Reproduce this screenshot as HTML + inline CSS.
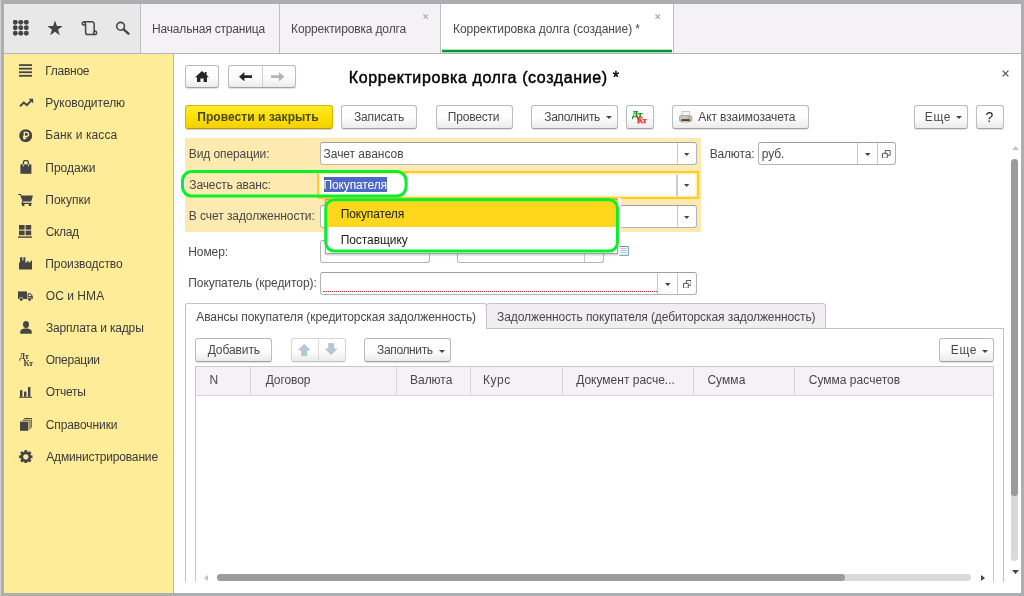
<!DOCTYPE html>
<html lang="ru">
<head>
<meta charset="utf-8">
<title>Корректировка долга (создание) *</title>
<style>
html,body{margin:0;padding:0;}
body{width:1024px;height:596px;overflow:hidden;background:#adaeb0;position:relative;
 font-family:"Liberation Sans",sans-serif;font-size:12px;color:#484848;}
.abs,.t,.btn,.ybtn,.inp{position:absolute;}
.t{white-space:nowrap;}
#win{position:absolute;left:4px;top:4px;width:1017px;height:589px;background:#fff;overflow:hidden;}
#L{position:absolute;left:-4px;top:-4px;width:1024px;height:596px;will-change:transform;}
.btn{box-sizing:border-box;border:1px solid #bcbcbc;border-bottom-color:#a2a2a2;border-radius:3px;
 background:linear-gradient(#ffffff 0%,#fefefe 50%,#ebebeb 100%);box-shadow:0 1px 1px rgba(0,0,0,0.13);}
.ybtn{box-sizing:border-box;border:1px solid #d6b400;border-bottom-color:#b99a00;border-radius:3px;
 background:linear-gradient(#ffea2e 0%,#ffe000 50%,#f3d000 100%);box-shadow:0 1px 1px rgba(0,0,0,0.2);}
.inp{box-sizing:border-box;border:1px solid #b4b4b4;border-top-color:#a0a0a0;border-radius:3px;background:#fff;}
</style>
</head>
<body>
<div style="position:absolute;left:0;top:0;width:1px;height:596px;background:#d0d0d0;"></div>
<div id="win"><div id="L">
<div class="abs" style="left:4px;top:4px;width:136px;height:49px;background:#e8e8e8;"></div>
<div class="abs" style="left:140px;top:4px;width:881px;height:49px;background:#f5f2f6;"></div>
<div class="abs" style="left:441px;top:4px;width:232px;height:49px;background:#ffffff;"></div>
<div class="abs" style="left:4px;top:53px;width:1017px;height:1px;background:#b7b5ba;"></div>
<div class="abs" style="left:140px;top:4px;width:1px;height:49px;background:#c0bec3;"></div>
<div class="abs" style="left:279px;top:4px;width:1px;height:49px;background:#c0bec3;"></div>
<div class="abs" style="left:440px;top:4px;width:1px;height:49px;background:#c0bec3;"></div>
<div class="abs" style="left:673px;top:4px;width:1px;height:49px;background:#c0bec3;"></div>
<div class="abs" style="left:442px;top:50px;width:230px;height:2px;background:#06963a;"></div>
<div class="abs" style="left:442px;top:49px;width:230px;height:1px;background:rgba(6,150,58,0.3);"></div>
<div class="abs" style="left:442px;top:52px;width:230px;height:1px;background:rgba(6,150,58,0.35);"></div>
<div class="t" style="left:152.04px;top:22.00px;font-size:12px;line-height:14px;height:14px;letter-spacing:-0.175px;">Начальная страница</div>
<div class="t" style="left:291.04px;top:22.00px;font-size:12px;line-height:14px;height:14px;letter-spacing:-0.145px;">Корректировка долга</div>
<div class="t" style="left:453.04px;top:22.00px;font-size:12px;line-height:14px;height:14px;letter-spacing:-0.053px;">Корректировка долга (создание) *</div>
<svg class="abs" style="left:423.3px;top:14.2px;" width="5.4" height="5.4" viewBox="0 0 5.4 5.4"><path d="M0.5 0.5L4.9 4.9M4.9 0.5L0.5 4.9" stroke="#adadad" stroke-width="1.15" fill="none"/></svg>
<svg class="abs" style="left:655.3px;top:14.2px;" width="5.4" height="5.4" viewBox="0 0 5.4 5.4"><path d="M0.5 0.5L4.9 4.9M4.9 0.5L0.5 4.9" stroke="#adadad" stroke-width="1.15" fill="none"/></svg>
<svg class="abs" style="left:12.9px;top:19.9px;" width="16" height="16" viewBox="0 0 16 16"><g fill="#454545"><circle cx="2.3" cy="2.3" r="2.45"/><circle cx="2.3" cy="7.8" r="2.45"/><circle cx="2.3" cy="13.3" r="2.45"/><circle cx="7.8" cy="2.3" r="2.45"/><circle cx="7.8" cy="7.8" r="2.45"/><circle cx="7.8" cy="13.3" r="2.45"/><circle cx="13.3" cy="2.3" r="2.45"/><circle cx="13.3" cy="7.8" r="2.45"/><circle cx="13.3" cy="13.3" r="2.45"/></g></svg>
<svg class="abs" style="left:46.65px;top:20.4px;" width="16" height="16" viewBox="0 0 16 16"><polygon points="8.00,0.50 9.91,5.97 15.70,6.10 11.09,9.60 12.76,15.15 8.00,11.85 3.24,15.15 4.91,9.60 0.30,6.10 6.09,5.97" fill="#454545"/></svg>
<svg class="abs" style="left:81px;top:20px;" width="17" height="16" viewBox="0 0 17 16"><g fill="none" stroke="#454545" stroke-width="1.5"><path d="M4.6 3.6V12.4A2.2 2.2 0 0 0 6.8 14.6H14"/><path d="M2.6 1.8H11A2.2 2.2 0 0 1 13.2 4V11.2"/><circle cx="2.7" cy="3.5" r="1.55" fill="#e9e9e9"/><circle cx="14.1" cy="12.9" r="1.55" fill="#e9e9e9"/></g></svg>
<svg class="abs" style="left:115px;top:21px;" width="16" height="15" viewBox="0 0 16 15"><circle cx="5.6" cy="5.3" r="3.9" fill="none" stroke="#454545" stroke-width="1.6"/><path d="M8.6 8.3L13.4 12.6" stroke="#454545" stroke-width="2.4" stroke-linecap="round"/></svg>
<div class="abs" style="left:4px;top:54px;width:169px;height:539px;background:#feec99;"></div>
<div class="abs" style="left:173px;top:54px;width:1px;height:539px;background:#d3bf55;"></div>
<div class="t" style="left:45.34px;top:64.00px;font-size:12px;line-height:14px;height:14px;letter-spacing:-0.284px;color:#3a3a3a;">Главное</div>
<div class="t" style="left:45.34px;top:96.00px;font-size:12px;line-height:14px;height:14px;letter-spacing:-0.025px;color:#3a3a3a;">Руководителю</div>
<div class="t" style="left:45.34px;top:128.00px;font-size:12px;line-height:14px;height:14px;letter-spacing:0.108px;color:#3a3a3a;">Банк и касса</div>
<div class="t" style="left:45.34px;top:161.00px;font-size:12px;line-height:14px;height:14px;letter-spacing:-0.008px;color:#3a3a3a;">Продажи</div>
<div class="t" style="left:45.34px;top:193.00px;font-size:12px;line-height:14px;height:14px;letter-spacing:-0.011px;color:#3a3a3a;">Покупки</div>
<div class="t" style="left:45.70px;top:225.00px;font-size:12px;line-height:14px;height:14px;letter-spacing:-0.346px;color:#3a3a3a;">Склад</div>
<div class="t" style="left:45.34px;top:257.00px;font-size:12px;line-height:14px;height:14px;letter-spacing:-0.082px;color:#3a3a3a;">Производство</div>
<div class="t" style="left:45.76px;top:289.00px;font-size:12px;line-height:14px;height:14px;letter-spacing:0.050px;color:#3a3a3a;">ОС и НМА</div>
<div class="t" style="left:45.88px;top:321.00px;font-size:12px;line-height:14px;height:14px;letter-spacing:-0.168px;color:#3a3a3a;">Зарплата и кадры</div>
<div class="t" style="left:45.76px;top:353.00px;font-size:12px;line-height:14px;height:14px;letter-spacing:-0.262px;color:#3a3a3a;">Операции</div>
<div class="t" style="left:45.76px;top:385.00px;font-size:12px;line-height:14px;height:14px;letter-spacing:-0.290px;color:#3a3a3a;">Отчеты</div>
<div class="t" style="left:45.70px;top:418.00px;font-size:12px;line-height:14px;height:14px;letter-spacing:-0.082px;color:#3a3a3a;">Справочники</div>
<div class="t" style="left:46.24px;top:450.00px;font-size:12px;line-height:14px;height:14px;letter-spacing:-0.163px;color:#3a3a3a;">Администрирование</div>
<svg class="abs" style="left:19px;top:64.4px;" width="13" height="13" viewBox="0 0 13 13"><rect x="0" y="0.20" width="13" height="1.8" fill="#454545"/><rect x="0" y="3.77" width="13" height="1.8" fill="#454545"/><rect x="0" y="7.34" width="13" height="1.8" fill="#454545"/><rect x="0" y="10.91" width="13" height="1.8" fill="#454545"/></svg>
<svg class="abs" style="left:18.5px;top:97.5px;" width="15" height="10" viewBox="0 0 15 10"><path d="M1 8.3L4.8 4.6L7.8 7.1L12.2 2.6" fill="none" stroke="#454545" stroke-width="1.9" stroke-linejoin="miter"/><path d="M9.6 0.8H14.2V5.4Z" fill="#454545"/></svg>
<svg class="abs" style="left:19px;top:129px;" width="13.4" height="13.4" viewBox="0 0 13.4 13.4"><circle cx="6.7" cy="6.7" r="6.5" fill="#454545"/><path d="M5.3 10.6V3.3H7.6A2 2 0 0 1 7.6 7.3H4M4 9H7.6" fill="none" stroke="#feec99" stroke-width="1.3"/></svg>
<svg class="abs" style="left:19.5px;top:159.6px;" width="12" height="14" viewBox="0 0 12 14"><path d="M0.4 4.4H11.4V13.8H0.4Z" fill="#454545"/><path d="M3.4 6V2.8A2.5 2.5 0 0 1 8.4 2.8V6" fill="none" stroke="#454545" stroke-width="1.3"/><path d="M3.4 4.4V6.4M8.4 4.4V6.4" stroke="#feec99" stroke-width="0.9"/></svg>
<svg class="abs" style="left:18px;top:192.5px;" width="15.5" height="13.5" viewBox="0 0 15.5 13.5"><path d="M0.2 0.9H2.8L3.6 2.6H15L13.2 8.4H4.6L2.2 1.9H0.2Z" fill="#454545"/><path d="M4.8 8.2L4 10.3H13.6" fill="none" stroke="#454545" stroke-width="1.2"/><circle cx="5.2" cy="11.9" r="1.35" fill="#454545"/><circle cx="12" cy="11.9" r="1.35" fill="#454545"/></svg>
<svg class="abs" style="left:18.2px;top:225px;" width="14.2" height="13" viewBox="0 0 14.2 13"><g fill="#454545"><rect x="1" y="0" width="5.6" height="4.6"/><rect x="7.6" y="0" width="5.6" height="4.6"/><rect x="1" y="5.6" width="5.6" height="4.6"/><rect x="7.6" y="5.6" width="5.6" height="4.6"/><rect x="0" y="11.4" width="14.2" height="1.4"/></g></svg>
<svg class="abs" style="left:19px;top:257.3px;" width="13.4" height="12.4" viewBox="0 0 13.4 12.4"><path d="M0 12.4V6.2L1 4.8V0.2H3.4V3.6H4.4V0.2H6.4V6L9.6 3.4V6L13.2 3.2V12.4Z" fill="#454545"/></svg>
<svg class="abs" style="left:18.2px;top:290.8px;" width="15" height="10.4" viewBox="0 0 15 10.4"><path d="M0 0.4H9V8H0Z" fill="#454545"/><path d="M9.6 2.2H12.6L14.8 5V8H9.6Z" fill="#454545"/><path d="M10.6 3.2H12.2L13.6 5H10.6Z" fill="#feec99"/><circle cx="3.2" cy="8.3" r="1.9" fill="#454545" stroke="#feec99" stroke-width="0.7"/><circle cx="11.6" cy="8.3" r="1.9" fill="#454545" stroke="#feec99" stroke-width="0.7"/></svg>
<svg class="abs" style="left:19.6px;top:321.3px;" width="12" height="13" viewBox="0 0 12 13"><ellipse cx="6" cy="3.5" rx="3" ry="3.5" fill="#454545"/><path d="M0.3 12.8V10.6C0.3 8.8 2.4 8.2 4.2 7.6H7.8C9.6 8.2 11.7 8.8 11.7 10.6V12.8Z" fill="#454545"/></svg>
<div class="t" style="left:19.2px;top:352.2px;font-family:'Liberation Serif',serif;font-weight:bold;font-size:8.5px;line-height:9px;letter-spacing:-0.3px;color:#454545;">Дт</div>
<div class="t" style="left:23.4px;top:358.6px;font-family:'Liberation Serif',serif;font-weight:bold;font-size:8.5px;line-height:9px;letter-spacing:-0.3px;color:#454545;">Кт</div>
<svg class="abs" style="left:19.2px;top:386.8px;" width="13.2" height="11" viewBox="0 0 13.2 11"><g fill="#454545"><rect x="1" y="3.2" width="2.4" height="6.6"/><rect x="5" y="4.6" width="2.4" height="5.2"/><rect x="9" y="0" width="2.4" height="9.8"/><rect x="0" y="9.8" width="13.2" height="1"/></g></svg>
<svg class="abs" style="left:19.8px;top:417.8px;" width="12.4" height="13" viewBox="0 0 12.4 13"><path d="M4.2 0.5H11.8V9.6" fill="none" stroke="#454545" stroke-width="1"/><path d="M2.4 2.2H10V11.2" fill="none" stroke="#454545" stroke-width="1"/><rect x="0" y="3.6" width="8.4" height="9.2" fill="#454545"/></svg>
<svg class="abs" style="left:19.2px;top:449.9px;" width="13.6" height="13.6" viewBox="0 0 13.6 13.6"><g transform="translate(6.8 6.8)"><g fill="#454545"><rect x="-1.45" y="-6.7" width="2.9" height="3" transform="rotate(0)"/><rect x="-1.45" y="-6.7" width="2.9" height="3" transform="rotate(45)"/><rect x="-1.45" y="-6.7" width="2.9" height="3" transform="rotate(90)"/><rect x="-1.45" y="-6.7" width="2.9" height="3" transform="rotate(135)"/><rect x="-1.45" y="-6.7" width="2.9" height="3" transform="rotate(180)"/><rect x="-1.45" y="-6.7" width="2.9" height="3" transform="rotate(225)"/><rect x="-1.45" y="-6.7" width="2.9" height="3" transform="rotate(270)"/><rect x="-1.45" y="-6.7" width="2.9" height="3" transform="rotate(315)"/></g><circle r="3.9" fill="none" stroke="#454545" stroke-width="2.6"/></g></svg>
<div class="btn" style="left:185px;top:65px;width:34px;height:23px;"></div>
<svg class="abs" style="left:195px;top:70.6px;" width="14" height="11.4" viewBox="0 0 14 11.4"><path d="M7 0L0 6.2H2V11.4H5.4V7.4H8.6V11.4H12V6.2H14L11.6 4.1V1H9.8V2.5Z" fill="#262626"/></svg>
<div class="btn" style="left:228px;top:65px;width:68px;height:23px;"></div>
<div class="abs" style="left:262px;top:66px;width:1px;height:21px;background:#cfcfcf;"></div>
<svg class="abs" style="left:239px;top:72px;" width="13.4" height="9.4" viewBox="0 0 13.4 9.4"><path d="M0 4.7L5.4 0V3.3H13.4V6.1H5.4V9.4Z" fill="#262626"/></svg>
<svg class="abs" style="left:271px;top:72px;" width="13.4" height="9.4" viewBox="0 0 13.4 9.4"><path d="M13.4 4.7L8 0V3.3H0V6.1H8V9.4Z" fill="#b4b4b4"/></svg>
<div class="t" style="left:348.72px;top:68.46px;font-size:16px;line-height:19px;height:19px;letter-spacing:0.602px;color:#000;-webkit-text-stroke:0.45px #000;">Корректировка долга (создание) *</div>
<svg class="abs" style="left:1002px;top:70.4px;" width="7" height="7" viewBox="0 0 7 7"><path d="M0.6 0.6L6.4 6.4M6.4 0.6L0.6 6.4" stroke="#555" stroke-width="1.3" fill="none"/></svg>
<div class="ybtn" style="left:185px;top:105px;width:148px;height:24px;"></div>
<div class="t" style="left:197.22px;top:110.00px;font-size:12px;line-height:14px;height:14px;letter-spacing:0.068px;font-weight:bold;color:#4a4720;">Провести и закрыть</div>
<div class="btn" style="left:341px;top:105px;width:76px;height:24px;"></div>
<div class="t" style="left:353.98px;top:110.00px;font-size:12px;line-height:14px;height:14px;letter-spacing:-0.158px;">Записать</div>
<div class="btn" style="left:436px;top:105px;width:77px;height:24px;"></div>
<div class="t" style="left:447.84px;top:110.00px;font-size:12px;line-height:14px;height:14px;letter-spacing:-0.191px;">Провести</div>
<div class="btn" style="left:531px;top:105px;width:87px;height:24px;"></div>
<div class="t" style="left:544.33px;top:110.00px;font-size:12px;line-height:14px;height:14px;letter-spacing:-0.366px;">Заполнить</div>
<svg class="abs" style="left:605.9px;top:116.1px;" width="6" height="3" viewBox="0 0 6 3"><path d="M0 0H6L3.0 3Z" fill="#444"/></svg>
<div class="btn" style="left:626px;top:105px;width:28px;height:24px;"></div>
<div class="t" style="left:632px;top:108.5px;font-family:'Liberation Serif',serif;font-weight:bold;font-size:9px;line-height:10px;letter-spacing:-0.2px;color:#178a17;-webkit-text-stroke:0.25px #178a17;">Дт</div>
<div class="t" style="left:637px;top:115.6px;font-family:'Liberation Serif',serif;font-weight:bold;font-size:8.2px;line-height:10px;letter-spacing:-0.2px;color:#ff2a2a;-webkit-text-stroke:0.25px #ff2a2a;">Кт</div>
<div class="btn" style="left:672px;top:105px;width:137px;height:24px;"></div>
<div class="t" style="left:698.24px;top:110.00px;font-size:12px;line-height:14px;height:14px;letter-spacing:-0.097px;">Акт взаимозачета</div>
<svg class="abs" style="left:679.3px;top:110.6px;" width="13.4" height="12.6" viewBox="0 0 13.4 12.6"><rect x="3" y="0.5" width="7.4" height="5" fill="#f2f7fb" stroke="#a9bfd0" stroke-width="0.8"/><rect x="0.5" y="4.6" width="12.4" height="6" rx="1.6" fill="#cfc4ba" stroke="#a59c94" stroke-width="0.8"/><rect x="2.4" y="8.2" width="8.6" height="2" fill="#3c3c3c"/><rect x="2.8" y="10.2" width="7.8" height="1.8" fill="#e9e2da" stroke="#b5aca4" stroke-width="0.5"/><rect x="8.8" y="6" width="1.4" height="1" fill="#e66"/><rect x="10.6" y="6" width="1.2" height="1" fill="#6b6"/></svg>
<div class="btn" style="left:914px;top:105px;width:54px;height:24px;"></div>
<div class="t" style="left:924.84px;top:110.00px;font-size:12px;line-height:14px;height:14px;letter-spacing:0.648px;">Еще</div>
<svg class="abs" style="left:956.4px;top:116.1px;" width="6" height="3" viewBox="0 0 6 3"><path d="M0 0H6L3.0 3Z" fill="#444"/></svg>
<div class="btn" style="left:976px;top:105px;width:28px;height:24px;"></div>
<div class="t" style="left:985.44px;top:109.15px;font-size:14px;line-height:16px;height:16px;letter-spacing:-0.093px;color:#222;">?</div>
<div class="abs" style="left:185px;top:138px;width:516px;height:94px;background:#fdeab0;"></div>
<div class="t" style="left:188.79px;top:147.00px;font-size:12px;line-height:14px;height:14px;letter-spacing:-0.092px;">Вид операции:</div>
<div class="t" style="left:189.33px;top:178.00px;font-size:12px;line-height:14px;height:14px;letter-spacing:-0.128px;">Зачесть аванс:</div>
<div class="t" style="left:188.79px;top:209.00px;font-size:12px;line-height:14px;height:14px;letter-spacing:-0.065px;">В счет задолженности:</div>
<div class="t" style="left:188.24px;top:245.00px;font-size:12px;line-height:14px;height:14px;letter-spacing:-0.080px;">Номер:</div>
<div class="t" style="left:188.24px;top:276.00px;font-size:12px;line-height:14px;height:14px;letter-spacing:-0.065px;">Покупатель (кредитор):</div>
<div class="inp" style="left:320px;top:142px;width:377px;height:23px;"></div>
<div class="abs" style="left:677px;top:143px;width:1px;height:21px;background:#c9c9c9;"></div>
<svg class="abs" style="left:684.4px;top:153.1px;" width="5.4" height="3" viewBox="0 0 5.4 3"><path d="M0 0H5.4L2.7 3Z" fill="#444"/></svg>
<div class="t" style="left:323.58px;top:147.00px;font-size:12px;line-height:14px;height:14px;letter-spacing:-0.038px;">Зачет авансов</div>
<div class="abs" style="left:317.4px;top:171px;width:382px;height:28px;box-sizing:border-box;border:2px solid #ffcc2a;border-radius:1px;background:#fff;box-shadow:inset 0 0 0 1.6px #fff0b4;"></div>
<div class="abs" style="left:676.4px;top:175px;width:1.4px;height:20.5px;background:#cbcbcb;"></div>
<svg class="abs" style="left:684.4px;top:184.3px;" width="5.4" height="3" viewBox="0 0 5.4 3"><path d="M0 0H5.4L2.7 3Z" fill="#444"/></svg>
<div class="abs" style="left:324px;top:177.3px;width:63.3px;height:14.7px;background:#4d68c6;"></div>
<div class="abs" style="left:324px;top:177.3px;width:1px;height:14.7px;background:#555a70;"></div>
<div class="t" style="left:323.54px;top:178.00px;font-size:12px;line-height:14px;height:14px;letter-spacing:-0.137px;color:#fff;">Покупателя</div>
<div class="inp" style="left:320px;top:205px;width:377px;height:23px;"></div>
<div class="abs" style="left:677px;top:206px;width:1px;height:21px;background:#c9c9c9;"></div>
<svg class="abs" style="left:684.4px;top:216.1px;" width="5.4" height="3" viewBox="0 0 5.4 3"><path d="M0 0H5.4L2.7 3Z" fill="#444"/></svg>
<div class="t" style="left:709.64px;top:147.00px;font-size:12px;line-height:14px;height:14px;letter-spacing:-0.147px;">Валюта:</div>
<div class="inp" style="left:758px;top:142px;width:138px;height:23px;"></div>
<div class="abs" style="left:857px;top:143px;width:1px;height:21px;background:#c9c9c9;"></div>
<div class="abs" style="left:876.5px;top:143px;width:1px;height:21px;background:#c9c9c9;"></div>
<svg class="abs" style="left:864.5999999999999px;top:153.1px;" width="5.4" height="3" viewBox="0 0 5.4 3"><path d="M0 0H5.4L2.7 3Z" fill="#444"/></svg>
<div class="t" style="left:761.82px;top:147.00px;font-size:12px;line-height:14px;height:14px;letter-spacing:-0.080px;">руб.</div>
<svg class="abs" style="left:882px;top:149.5px;" width="8.6" height="8.6" viewBox="0 0 9 9"><path d="M3.5 0.5H8.5V5.5H3.5Z" fill="#fff" stroke="#505050" stroke-width="1"/><path d="M0.5 3.5H5.5V8.5H0.5Z" fill="#fff" stroke="#505050" stroke-width="1"/></svg>
<div class="inp" style="left:320px;top:240px;width:110px;height:23px;"></div>
<div class="inp" style="left:457px;top:240px;width:147px;height:23px;"></div>
<div class="abs" style="left:584px;top:241px;width:1px;height:21px;background:#c9c9c9;"></div>
<div class="inp" style="left:320px;top:272px;width:377px;height:23px;"></div>
<div class="abs" style="left:657px;top:273px;width:1px;height:21px;background:#c9c9c9;"></div>
<div class="abs" style="left:676.5px;top:273px;width:1px;height:21px;background:#c9c9c9;"></div>
<svg class="abs" style="left:665.0999999999999px;top:282.7px;" width="5.4" height="3" viewBox="0 0 5.4 3"><path d="M0 0H5.4L2.7 3Z" fill="#444"/></svg>
<svg class="abs" style="left:682.7px;top:279.6px;" width="8.6" height="8.6" viewBox="0 0 9 9"><path d="M3.5 0.5H8.5V5.5H3.5Z" fill="#fff" stroke="#505050" stroke-width="1"/><path d="M0.5 3.5H5.5V8.5H0.5Z" fill="#fff" stroke="#505050" stroke-width="1"/></svg>
<div class="abs" style="left:323px;top:291px;width:334px;height:0;border-top:1px dotted #f03030;"></div>
<div class="abs" style="left:185px;top:328px;width:819px;height:270px;box-sizing:border-box;border:1px solid #c4c2c4;"></div>
<div class="abs" style="left:486px;top:303px;width:340px;height:26px;box-sizing:border-box;border:1px solid #c4c2c4;border-radius:3px 3px 0 0;background:#f1eef1;"></div>
<div class="abs" style="left:185px;top:303px;width:302px;height:26px;box-sizing:border-box;border:1px solid #c4c2c4;border-bottom:none;border-radius:3px 3px 0 0;background:#fff;"></div>
<div class="t" style="left:196.24px;top:310.00px;font-size:12px;line-height:14px;height:14px;letter-spacing:-0.074px;">Авансы покупателя (кредиторская задолженность)</div>
<div class="t" style="left:497.08px;top:310.00px;font-size:12px;line-height:14px;height:14px;letter-spacing:-0.084px;">Задолженность покупателя (дебиторская задолженность)</div>
<div class="btn" style="left:195px;top:338px;width:77px;height:24px;"></div>
<div class="t" style="left:207.64px;top:343.00px;font-size:12px;line-height:14px;height:14px;letter-spacing:-0.080px;">Добавить</div>
<div class="btn" style="left:291px;top:338px;width:55px;height:24px;border-color:#d6d6d6;border-bottom-color:#c4c4c4;box-shadow:0 1px 1px rgba(0,0,0,0.07);"></div>
<div class="abs" style="left:317.5px;top:339px;width:1px;height:22px;background:#dcdcdc;"></div>
<svg class="abs" style="left:298px;top:344.2px;" width="12.4" height="12" viewBox="0 0 11 11"><path d="M5.5 0.3L10.7 5.6H7.9V10.6H3.1V5.6H0.3Z" fill="#b4c8d3" stroke="#a3b9c5" stroke-width="0.5"/></svg>
<svg class="abs" style="left:324.6px;top:343.4px;" width="12.4" height="12" viewBox="0 0 11 11"><path d="M5.5 10.7L10.7 5.4H7.9V0.4H3.1V5.4H0.3Z" fill="#b4c8d3" stroke="#a3b9c5" stroke-width="0.5"/></svg>
<div class="btn" style="left:364px;top:338px;width:86.5px;height:24px;"></div>
<div class="t" style="left:377.08px;top:343.00px;font-size:12px;line-height:14px;height:14px;letter-spacing:-0.366px;">Заполнить</div>
<svg class="abs" style="left:438.5px;top:349.5px;" width="6" height="3" viewBox="0 0 6 3"><path d="M0 0H6L3.0 3Z" fill="#444"/></svg>
<div class="btn" style="left:939px;top:338px;width:55px;height:24px;"></div>
<div class="t" style="left:950.84px;top:343.00px;font-size:12px;line-height:14px;height:14px;letter-spacing:0.581px;">Еще</div>
<svg class="abs" style="left:981.6px;top:349.5px;" width="6" height="3" viewBox="0 0 6 3"><path d="M0 0H6L3.0 3Z" fill="#444"/></svg>
<div class="abs" style="left:195px;top:366px;width:799px;height:230px;box-sizing:border-box;border:1px solid #c9c7c9;background:#fff;"></div>
<div class="abs" style="left:196px;top:367px;width:797px;height:28px;background:#f4f2f4;"></div>
<div class="abs" style="left:196px;top:395px;width:797px;height:1px;background:#d9d7d9;"></div>
<div class="abs" style="left:250px;top:367px;width:1px;height:28px;background:#d6d4d6;"></div>
<div class="abs" style="left:395.5px;top:367px;width:1px;height:28px;background:#d6d4d6;"></div>
<div class="abs" style="left:469.5px;top:367px;width:1px;height:28px;background:#d6d4d6;"></div>
<div class="abs" style="left:561.5px;top:367px;width:1px;height:28px;background:#d6d4d6;"></div>
<div class="abs" style="left:692.5px;top:367px;width:1px;height:28px;background:#d6d4d6;"></div>
<div class="abs" style="left:793.5px;top:367px;width:1px;height:28px;background:#d6d4d6;"></div>
<div class="t" style="left:209.44px;top:373.00px;font-size:12px;line-height:14px;height:14px;letter-spacing:-0.080px;">N</div>
<div class="t" style="left:265.64px;top:373.00px;font-size:12px;line-height:14px;height:14px;letter-spacing:-0.065px;">Договор</div>
<div class="t" style="left:410.04px;top:373.00px;font-size:12px;line-height:14px;height:14px;letter-spacing:-0.032px;">Валюта</div>
<div class="t" style="left:483.04px;top:373.00px;font-size:12px;line-height:14px;height:14px;letter-spacing:0.558px;">Курс</div>
<div class="t" style="left:576.19px;top:373.00px;font-size:12px;line-height:14px;height:14px;letter-spacing:-0.003px;">Документ расче...</div>
<div class="t" style="left:707.40px;top:373.00px;font-size:12px;line-height:14px;height:14px;letter-spacing:0.059px;">Сумма</div>
<div class="t" style="left:808.70px;top:373.00px;font-size:12px;line-height:14px;height:14px;letter-spacing:0.022px;">Сумма расчетов</div>
<div class="abs" style="left:174px;top:582px;width:847px;height:11px;background:#fff;"></div>
<svg class="abs" style="left:1011.5px;top:145.6px;" width="7" height="4" viewBox="0 0 7 4"><path d="M0 4L3.5 0L7 4Z" fill="#c4c4c4"/></svg>
<div class="abs" style="left:1011.3px;top:158.6px;width:7px;height:402.5px;border-radius:3.5px;background:#d9d9d9;"></div>
<div class="abs" style="left:1011.3px;top:158.6px;width:7px;height:337.3px;border-radius:3.5px;background:#9b9b9d;"></div>
<svg class="abs" style="left:1011.5px;top:570px;" width="7" height="4" viewBox="0 0 7 4"><path d="M0 0L3.5 4L7 0Z" fill="#444"/></svg>
<svg class="abs" style="left:204px;top:575.3px;" width="4" height="6" viewBox="0 0 4 6"><path d="M4 0L0 3L4 6Z" fill="#c4c4c4"/></svg>
<div class="abs" style="left:217px;top:574px;width:754px;height:7px;border-radius:3.5px;background:#d9d9d9;"></div>
<div class="abs" style="left:217px;top:574px;width:627.5px;height:7px;border-radius:3.5px;background:#9b9b9d;"></div>
<svg class="abs" style="left:981px;top:574.6px;" width="4" height="6" viewBox="0 0 4 6"><path d="M0 0L4 3L0 6Z" fill="#444"/></svg>
<div class="abs" style="left:618px;top:198px;width:3px;height:58px;background:#fff;"></div>
<div class="abs" style="left:325px;top:199px;width:293px;height:55px;box-sizing:border-box;border:1px solid #a4a4a4;background:#fff;box-shadow:0 1px 2px rgba(0,0,0,0.25);"></div>
<div class="abs" style="left:326px;top:200px;width:292px;height:27px;background:#ffd81e;"></div>
<div class="t" style="left:340.74px;top:207.00px;font-size:12px;line-height:14px;height:14px;letter-spacing:-0.137px;color:#222;">Покупателя</div>
<div class="t" style="left:340.74px;top:233.00px;font-size:12px;line-height:14px;height:14px;letter-spacing:-0.080px;color:#222;">Поставщику</div>
<svg class="abs" style="left:619.2px;top:246.4px;" width="10" height="10" viewBox="0 0 10 10"><rect x="0.3" y="0.3" width="9.2" height="9.2" fill="#fafdff"/><path d="M0.3 0.5H9.3V9.3H0.3" fill="none" stroke="#6a95a6" stroke-width="1"/><path d="M1.6 2.6H7.6M1.6 4.6H7.6M1.6 6.6H7.6" stroke="#9cb8c9" stroke-width="0.9"/></svg>
<svg class="abs" style="left:178px;top:166px;" width="236" height="36" viewBox="0 0 236 36"><rect x="4.5" y="5.4" width="223.6" height="24.7" rx="9.5" fill="none" stroke="#08f02c" stroke-width="3"/></svg>
<svg class="abs" style="left:320px;top:194px;" width="304" height="64" viewBox="0 0 304 64"><rect x="5.8" y="5.7" width="291.6" height="51.4" rx="8.5" fill="none" stroke="#08f02c" stroke-width="3"/></svg>
</div></div>
</body>
</html>
